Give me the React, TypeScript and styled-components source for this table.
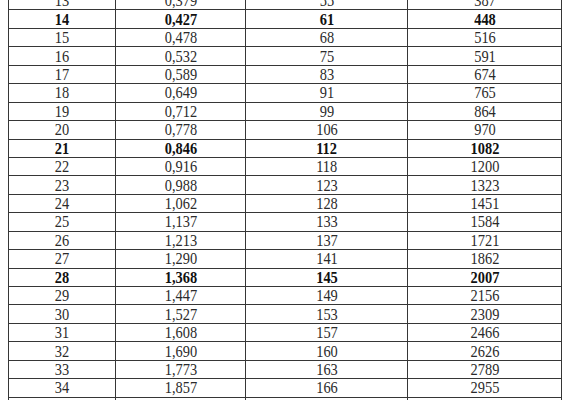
import React from 'react';
import styled, { createGlobalStyle } from 'styled-components';

const GlobalStyle = createGlobalStyle`
  html, body {
    margin: 0;
    padding: 0;
    background: #ffffff;
  }
  body {
    font-family: "Liberation Serif", "Times New Roman", serif;
    overflow: hidden;
  }
`;

const Page = styled.div`
  width: 570px;
  height: 400px;
  overflow: hidden;
  padding-left: 8px;
  box-sizing: border-box;
`;

const Table = styled.div`
  margin-top: -8px;
  width: 554px;
  border-left: 1px solid #363636;
  box-sizing: border-box;
`;

const Row = styled.div`
  display: grid;
  grid-template-columns: 107px 130px 162px 154px;
  height: 18.45px;
  box-sizing: border-box;
  border-bottom: 1px solid #363636;
`;

const Cell = styled.div<{ $bold?: boolean }>`
  display: flex;
  align-items: center;
  justify-content: center;
  padding-top: 1px;
  box-sizing: border-box;
  border-right: 1px solid #363636;
  font-size: 16px;
  line-height: 1;
  color: ${(p) => (p.$bold ? '#111' : '#2b2b2b')};
  font-weight: ${(p) => (p.$bold ? 700 : 400)};
`;

const Figure = styled.span`
  display: inline-block;
  transform: scaleX(0.9);
`;

const rows: [number, string, number, number][] = [
  [13, '0,379', 55, 387],
  [14, '0,427', 61, 448],
  [15, '0,478', 68, 516],
  [16, '0,532', 75, 591],
  [17, '0,589', 83, 674],
  [18, '0,649', 91, 765],
  [19, '0,712', 99, 864],
  [20, '0,778', 106, 970],
  [21, '0,846', 112, 1082],
  [22, '0,916', 118, 1200],
  [23, '0,988', 123, 1323],
  [24, '1,062', 128, 1451],
  [25, '1,137', 133, 1584],
  [26, '1,213', 137, 1721],
  [27, '1,290', 141, 1862],
  [28, '1,368', 145, 2007],
  [29, '1,447', 149, 2156],
  [30, '1,527', 153, 2309],
  [31, '1,608', 157, 2466],
  [32, '1,690', 160, 2626],
  [33, '1,773', 163, 2789],
  [34, '1,857', 166, 2955],
  [35, '1,942', 169, 3124],
];

const App = () => (
  <Page>
    <GlobalStyle />
    <Table>
      {rows.map(([n, a, b, c]) => {
        const bold = n % 7 === 0;
        return (
          <Row key={n}>
            <Cell $bold={bold}><Figure>{n}</Figure></Cell>
            <Cell $bold={bold}><Figure>{a}</Figure></Cell>
            <Cell $bold={bold}><Figure>{b}</Figure></Cell>
            <Cell $bold={bold}><Figure>{c}</Figure></Cell>
          </Row>
        );
      })}
    </Table>
  </Page>
);

export default App;
